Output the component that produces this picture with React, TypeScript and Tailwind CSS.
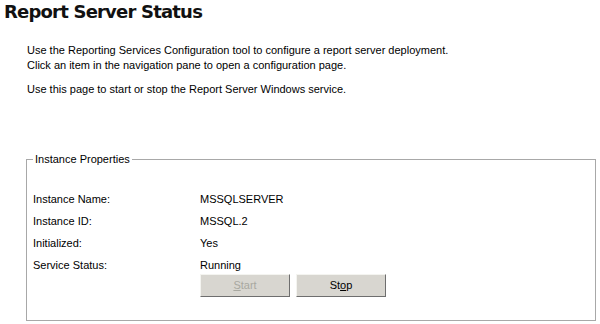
const rows = [
  { label: "Instance Name:", value: "MSSQLSERVER" },
  { label: "Instance ID:", value: "MSSQL.2" },
  { label: "Initialized:", value: "Yes" },
  { label: "Service Status:", value: "Running" },
];

const WinButton = ({
  children,
  disabled,
}: {
  children: React.ReactNode;
  disabled?: boolean;
}) => (
  <button
    type="button"
    disabled={disabled}
    className={
      "w-[90px] h-[23px] bg-[#d8d6d0] border border-t-[#f4f4f0] border-l-[#f4f4f0] border-r-[#6e6e6e] border-b-[#6e6e6e] text-[11px] " +
      (disabled ? "text-[#a8a8a0]" : "text-black")
    }
  >
    {children}
  </button>
);

export default function App() {
  return (
    <div className="w-[600px] h-[324px] bg-white overflow-hidden font-['Liberation_Sans',Arial,sans-serif] text-[11px] text-black">
      <h1 className="pl-[4px] pt-[1px] h-[24px] font-['DejaVu_Sans',Verdana,sans-serif] font-bold text-[18px] leading-[22px] tracking-[-0.8px] text-[#111]">
        Report Server Status
      </h1>

      <div className="pl-[27px] pt-[19px] leading-[15px]">
        <p>
          Use the Reporting Services Configuration tool to configure a report server deployment.
        </p>
        <p>Click an item in the navigation pane to open a configuration page.</p>
        <p className="mt-[9px]">
          Use this page to start or stop the Report Server Windows service.
        </p>
      </div>

      <fieldset className="ml-[26px] mt-[56px] w-[570px] h-[168px] border border-[#a8a8a8] px-[6px]">
        <legend className="px-[2px] leading-[13px]">Instance Properties</legend>

        <div className="mt-[22px] flex flex-col">
          {rows.map((row) => (
            <div key={row.label} className="flex h-[22px] leading-[22px]">
              <span className="w-[167px]">{row.label}</span>
              <span>{row.value}</span>
            </div>
          ))}
        </div>

        <div className="ml-[167px] -mt-[2px] flex gap-[6px]">
          <WinButton disabled>
            <u>S</u>tart
          </WinButton>
          <WinButton>
            St<u>o</u>p
          </WinButton>
        </div>
      </fieldset>
    </div>
  );
}
